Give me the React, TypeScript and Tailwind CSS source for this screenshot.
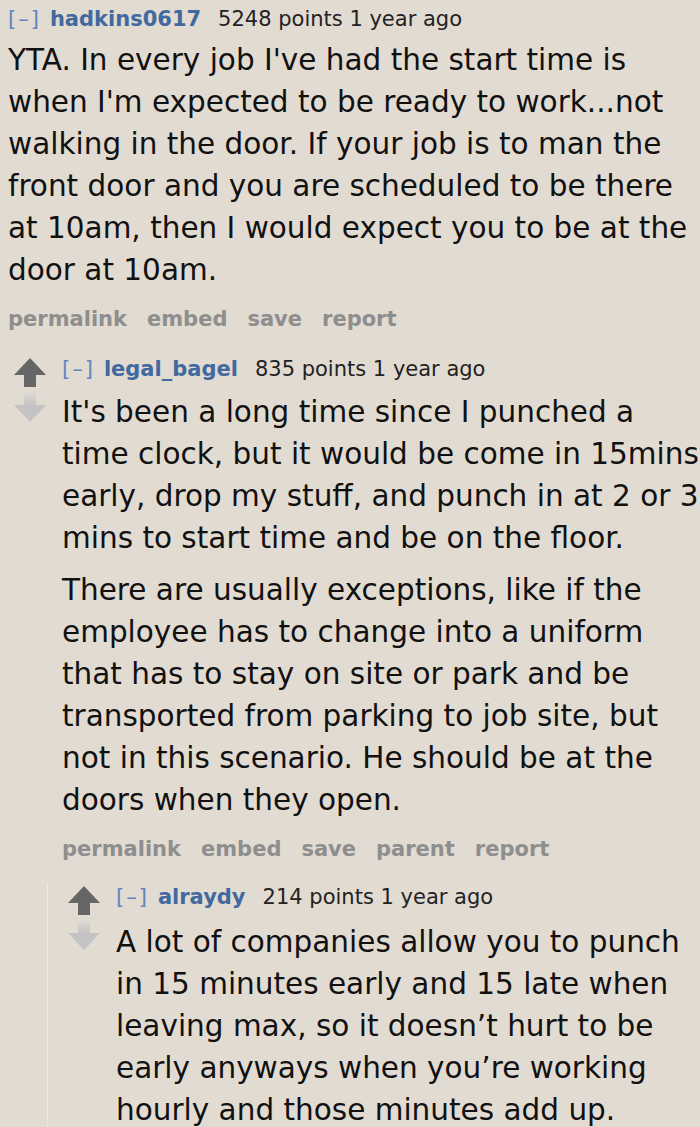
import React from 'react';

const font = { fontFamily: '"DejaVu Sans", Verdana, sans-serif' };

function Arrows() {
  return (
    <div className="flex flex-col items-center w-[32px] shrink-0 pt-[3px]">
      <svg width="32" height="29" viewBox="0 0 32 29">
        <path d="M16 0 L32 17 L22 17 L22 29 L10 29 L10 17 L0 17 Z" fill="#666666" />
      </svg>
      <svg width="32" height="29" viewBox="0 0 32 29" className="mt-[6px]">
        <defs>
          <linearGradient id="dn" x1="0" y1="0" x2="0" y2="1">
            <stop offset="0" stopColor="#dcd8d3" />
            <stop offset="0.45" stopColor="#c3c3c3" />
          </linearGradient>
        </defs>
        <path d="M10 0 L22 0 L22 12 L32 12 L16 29 L0 12 L10 12 Z" fill="url(#dn)" />
      </svg>
    </div>
  );
}

function Tagline({ user, points }: { user: string; points: string }) {
  return (
    <div className="text-[21px] leading-[28px] text-[#222] whitespace-nowrap">
      <span className="text-[#5f86bf] tracking-[2px]">[–]</span>
      <span className="font-bold text-[#41699f] ml-[9px]">{user}</span>
      <span className="ml-[17px]">{points} points 1 year ago</span>
    </div>
  );
}

function Buttons({ items }: { items: string[] }) {
  return (
    <div className="flex gap-[20px] text-[21px] leading-[28px] font-bold text-[#8e8e8e] mt-[14px]">
      {items.map((b) => (
        <span key={b}>{b}</span>
      ))}
    </div>
  );
}

function Body({ lines }: { lines: string[] }) {
  return (
    <p className="text-[29.5px] leading-[42px] text-[#111] whitespace-nowrap">
      {lines.map((l, i) => (
        <React.Fragment key={i}>
          {l}
          {i < lines.length - 1 && <br />}
        </React.Fragment>
      ))}
    </p>
  );
}

export default function App() {
  return (
    <div className="min-h-screen bg-[#e2dbd2] overflow-hidden" style={font}>
      <div className="pl-[8px] pt-[5px]">
        <Tagline user="hadkins0617" points="5248" />
        <div className="mt-[6px]">
          <Body
            lines={[
              "YTA. In every job I've had the start time is",
              "when I'm expected to be ready to work...not",
              'walking in the door. If your job is to man the',
              'front door and you are scheduled to be there',
              'at 10am, then I would expect you to be at the',
              'door at 10am.',
            ]}
          />
        </div>
        <Buttons items={['permalink', 'embed', 'save', 'report']} />

        <div className="flex mt-[22px] pl-[6px] gap-[16px]">
          <Arrows />
          <div className="min-w-0">
            <Tagline user="legal_bagel" points="835" />
            <div className="mt-[8px] space-y-[10px]">
              <Body
                lines={[
                  "It's been a long time since I punched a",
                  'time clock, but it would be come in 15mins',
                  'early, drop my stuff, and punch in at 2 or 3',
                  'mins to start time and be on the floor.',
                ]}
              />
              <Body
                lines={[
                  'There are usually exceptions, like if the',
                  'employee has to change into a uniform',
                  'that has to stay on site or park and be',
                  'transported from parking to job site, but',
                  'not in this scenario. He should be at the',
                  'doors when they open.',
                ]}
              />
            </div>
            <Buttons items={['permalink', 'embed', 'save', 'parent', 'report']} />
          </div>
        </div>

        <div className="ml-[39px] mt-[20px] border-l border-[#ebe8ec] pl-[20px] pb-[40px]">
          <div className="flex gap-[16px]">
            <Arrows />
            <div className="min-w-0">
              <Tagline user="alraydy" points="214" />
              <div className="mt-[10px]">
                <Body
                  lines={[
                    'A lot of companies allow you to punch',
                    'in 15 minutes early and 15 late when',
                    'leaving max, so it doesn’t hurt to be',
                    'early anyways when you’re working',
                    'hourly and those minutes add up.',
                  ]}
                />
              </div>
            </div>
          </div>
        </div>
      </div>
    </div>
  );
}
